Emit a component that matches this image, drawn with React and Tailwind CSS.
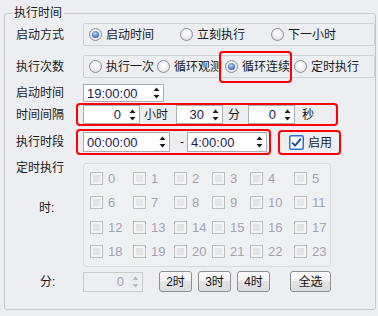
import React from "react";

const FONT = "font-['Liberation_Sans','Noto_Sans_CJK_SC',sans-serif]";

const Radio = ({ checked }) => (
  <span className="flex-none w-[13px] h-[13px] rounded-full border border-[#8f9092] bg-[radial-gradient(circle_at_50%_40%,#ffffff_0%,#f2f2f2_45%,#cfd0d2_100%)] flex items-center justify-center">
    {checked && (
      <span className="w-[7px] h-[7px] rounded-full bg-[radial-gradient(circle_at_45%_35%,#c8dcfa_0%,#5b8fdc_45%,#1f4aa3_100%)]" />
    )}
  </span>
);

const RadioItem = ({ label, checked, width }) => (
  <div className={`flex items-center gap-[4px] h-full ${width}`}>
    <Radio checked={checked} />
    <span className="whitespace-nowrap">{label}</span>
  </div>
);

const Arrows = ({ color = "#1b1b1b" }) => (
  <svg width="7" height="12" viewBox="0 0 7 12" className="flex-none">
    <path d="M3.5 0.5 L6.5 4 L0.5 4 Z" fill={color} />
    <path d="M0.5 8 L6.5 8 L3.5 11.5 Z" fill={color} />
  </svg>
);

const Spin = ({ value, box, align = "right", disabled }) => (
  <div
    className={`flex items-center border ${box} ${
      disabled
        ? "bg-[#eceef1] border-[#c9cbd0] text-[#a3a5b3]"
        : "bg-white border-[#abadb3] text-[#1c1a52]"
    }`}
  >
    <span
      className={`flex-1 text-[13px] leading-none ${
        align === "right" ? "text-right pr-[8px]" : "text-left pl-[3px]"
      }`}
    >
      {value}
    </span>
    <span className="pr-[3px] flex items-center">
      <Arrows color={disabled ? "#b8bac2" : "#1b1b1b"} />
    </span>
  </div>
);

const HourBox = ({ n }) => (
  <div className="flex items-center gap-[5px] h-[13px]">
    <span className="flex-none w-[13px] h-[13px] border border-[#bdbec2] bg-[#f3f3f4] p-[2px]">
      <span className="block w-full h-full bg-[#e4e5e8]" />
    </span>
    <span className="text-[13px] leading-none text-[#a2a3b4]">{n}</span>
  </div>
);

const Btn = ({ label, width }) => (
  <button
    className={`h-[21px] ${width} border border-[#8e8f91] rounded-[3px] bg-[linear-gradient(#fbfbfb_0%,#f1f1f1_50%,#e4e4e5_50%,#dcdcde_100%)] text-[12px] leading-none text-[#111]`}
  >
    {label}
  </button>
);

const Label = ({ children }) => (
  <div className="flex-none w-[67px] flex items-center">{children}</div>
);

const colWidths = ["w-[43px]", "w-[41px]", "w-[38px]", "w-[38px]", "w-[44px]", "w-[36px]"];
const rowHeights = ["h-[24px]", "h-[25px]", "h-[24px]", "h-[13px]"];

export default function App() {
  return (
    <div className={`w-[378px] h-[316px] bg-[#eceef1] text-[12px] text-[#1b1b1b] ${FONT} pt-[3px] pl-[4px] overflow-hidden`}>
      <fieldset className="w-[367px] h-[307px] border border-[#c5c7cc] rounded-[3px] pl-[11px] m-0">
        <legend className="-ml-[4px] px-[2px] leading-[20px] text-[12px]">执行时间</legend>

        {/* 启动方式 */}
        <div className="flex h-[23px]">
          <Label>启动方式</Label>
          <div className="flex-none w-[292px] h-[23px] border border-[#d0d2d7] rounded-[2px] flex items-center pl-[5px]">
            <RadioItem label="启动时间" checked width="w-[91px]" />
            <RadioItem label="立刻执行" width="w-[91px]" />
            <RadioItem label="下一小时" width="w-[90px]" />
          </div>
        </div>

        {/* 执行次数 */}
        <div className="flex h-[23px] mt-[9px]">
          <Label>执行次数</Label>
          <div className="flex-none w-[292px] h-[23px] border border-[#d0d2d7] rounded-[2px] flex items-center pl-[5px]">
            <div className="w-[68px] h-full overflow-hidden">
              <RadioItem label="执行一次" width="w-[68px]" />
            </div>
            <div className="w-[68px] h-full overflow-hidden">
              <RadioItem label="循环观测" width="w-[68px]" />
            </div>
            <div className="relative w-[69px] h-full">
              <RadioItem label="循环连续" checked width="w-[69px]" />
              <div className="absolute -left-[6px] -top-[5px] -bottom-[6px] right-[2px] border-2 border-[#ff0000] rounded-[4px]" />
            </div>
            <RadioItem label="定时执行" width="w-[60px]" />
          </div>
        </div>

        {/* 启动时间 */}
        <div className="flex h-[18px] mt-[6px]">
          <Label>启动时间</Label>
          <Spin value="19:00:00" align="left" box="w-[81px] h-[18px]" />
        </div>

        {/* 时间间隔 */}
        <div className="flex h-[23px] mt-[1px]">
          <Label>时间间隔</Label>
          <div className="-ml-[7px] w-[262px] h-[23px] border-2 border-[#ff0000] rounded-[4px] flex items-center pl-[5px]">
            <Spin value="0" box="w-[57px] h-[19px]" />
            <span className="ml-[4px]">小时</span>
            <Spin value="30" box="ml-[8px] w-[47px] h-[19px]" />
            <span className="ml-[5px]">分</span>
            <Spin value="0" box="ml-[8px] w-[47px] h-[19px]" />
            <span className="ml-[7px]">秒</span>
          </div>
        </div>

        {/* 执行时段 */}
        <div className="flex h-[26px] mt-[3px]">
          <Label>执行时段</Label>
          <div className="-ml-[7px] w-[195px] h-[26px] border-2 border-[#ff0000] rounded-[4px] flex items-center pl-[5px]">
            <Spin value="00:00:00" align="left" box="w-[87px] h-[20px]" />
            <span className="ml-[10px] w-[4px]">-</span>
            <Spin value="4:00:00" align="left" box="ml-[3px] w-[80px] h-[20px]" />
          </div>
          <div className="ml-[7px] mt-[1px] w-[63px] h-[25px] border-2 border-[#ff0000] rounded-[4px] flex items-center pl-[9px]">
            <svg width="15" height="15" viewBox="0 0 15 15" className="flex-none">
              <rect x="0.75" y="0.75" width="13.5" height="13.5" rx="1.5" fill="#ffffff" stroke="#2a74d0" strokeWidth="1.5" />
              <path d="M3.2 7.6 L6.1 10.6 L11.8 3.8" fill="none" stroke="#1a4f9c" strokeWidth="2" />
            </svg>
            <span className="ml-[4px] text-[12px]">启用</span>
          </div>
        </div>

        {/* 定时执行 */}
        <div className="flex items-start h-[112px]">
          <div className="flex-none w-[67px] flex flex-col">
            <span className="mt-[5px] leading-[16px]">定时执行</span>
            <span className="mt-[24px] pl-[23px] leading-[16px]">时:</span>
          </div>
          <div className="mt-[8px] w-[248px] h-[104px] border border-[#d9dade] rounded-[3px] bg-[#eef0f2] pt-[8px] pl-[6px]">
            {rowHeights.map((rh, r) => (
              <div key={r} className={`flex ${rh}`}>
                {colWidths.map((cw, c) => (
                  <div key={c} className={cw}>
                    <HourBox n={r * 6 + c} />
                  </div>
                ))}
              </div>
            ))}
          </div>
        </div>

        {/* 分 */}
        <div className="flex items-center h-[21px] mt-[4px]">
          <div className="flex-none w-[67px] pl-[24px]">分:</div>
          <Spin value="0" disabled box="w-[60px] h-[20px]" />
          <div className="ml-[16px] flex gap-[6px]">
            <Btn label="2时" width="w-[33px]" />
            <Btn label="3时" width="w-[33px]" />
            <Btn label="4时" width="w-[33px]" />
          </div>
          <div className="ml-[20px]">
            <Btn label="全选" width="w-[41px]" />
          </div>
        </div>
      </fieldset>
    </div>
  );
}
